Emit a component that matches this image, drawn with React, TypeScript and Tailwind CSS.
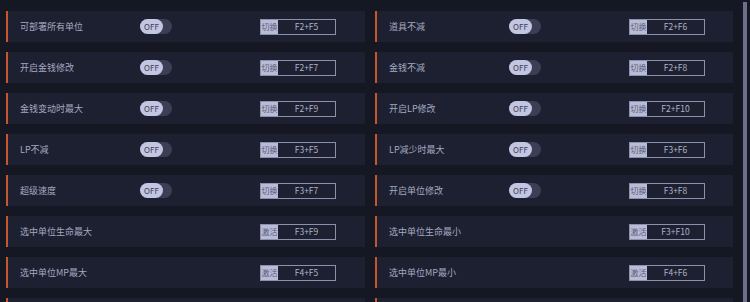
import React from 'react'

type Row = {
  label: string
  toggle: boolean
  action: string
  keys: string
}

const left: Row[] = [
  { label: '可部署所有单位', toggle: true, action: '切换', keys: 'F2+F5' },
  { label: '开启金钱修改', toggle: true, action: '切换', keys: 'F2+F7' },
  { label: '金钱变动时最大', toggle: true, action: '切换', keys: 'F2+F9' },
  { label: 'LP不减', toggle: true, action: '切换', keys: 'F3+F5' },
  { label: '超级速度', toggle: true, action: '切换', keys: 'F3+F7' },
  { label: '选中单位生命最大', toggle: false, action: '激活', keys: 'F3+F9' },
  { label: '选中单位MP最大', toggle: false, action: '激活', keys: 'F4+F5' },
]

const right: Row[] = [
  { label: '道具不减', toggle: true, action: '切换', keys: 'F2+F6' },
  { label: '金钱不减', toggle: true, action: '切换', keys: 'F2+F8' },
  { label: '开启LP修改', toggle: true, action: '切换', keys: 'F2+F10' },
  { label: 'LP减少时最大', toggle: true, action: '切换', keys: 'F3+F6' },
  { label: '开启单位修改', toggle: true, action: '切换', keys: 'F3+F8' },
  { label: '选中单位生命最小', toggle: false, action: '激活', keys: 'F3+F10' },
  { label: '选中单位MP最小', toggle: false, action: '激活', keys: 'F4+F6' },
]

function Toggle() {
  return (
    <div className="flex h-[15px] w-[32px] items-center rounded-full bg-[#3b3e55]">
      <div className="flex h-[15px] w-[23px] items-center justify-center rounded-full bg-[#c3c6e2] text-[8px] leading-none text-[#3a3d52]">
        OFF
      </div>
    </div>
  )
}

function KeyBox({ action, keys }: { action: string; keys: string }) {
  return (
    <div className="flex h-[16px] w-[76px] border border-[#8d90ab]">
      <div className="flex w-[17px] items-center justify-center bg-[#b9bcd9] text-[8px] leading-none text-[#5a5d74]">
        {action}
      </div>
      <div className="flex flex-1 items-center justify-center text-[8.5px] leading-none text-[#aeb2c6]">
        {keys}
      </div>
    </div>
  )
}

function OptionRow({ row }: { row?: Row }) {
  return (
    <div className="flex h-[31px] items-center border-l-2 border-[#c7562c] bg-[#1d2030]">
      {row && (
        <>
          <div className="w-[120px] pl-[12px] text-[9px] leading-none text-[#a4a9c0]">
            {row.label}
          </div>
          <div className="w-[132px] pl-[12px]">{row.toggle && <Toggle />}</div>
          <KeyBox action={row.action} keys={row.keys} />
        </>
      )}
    </div>
  )
}

export default function App() {
  return (
    <div
      className="flex h-[302px] w-[750px] overflow-hidden bg-[#151823]"
      style={{ fontFamily: '"Noto Sans CJK SC", "Noto Sans", sans-serif' }}
    >
      <div className="grid flex-1 grid-cols-[359px_358px] content-start gap-x-[10px] gap-y-[10px] pl-[6px] pr-[10px] pt-[11px]">
        {left.map((l, i) => (
          <React.Fragment key={i}>
            <OptionRow row={l} />
            <OptionRow row={right[i]} />
          </React.Fragment>
        ))}
        <OptionRow />
        <OptionRow />
      </div>
      <div className="mr-[3px] mt-[2px] w-[4px] bg-[#6d7088]" />
    </div>
  )
}
